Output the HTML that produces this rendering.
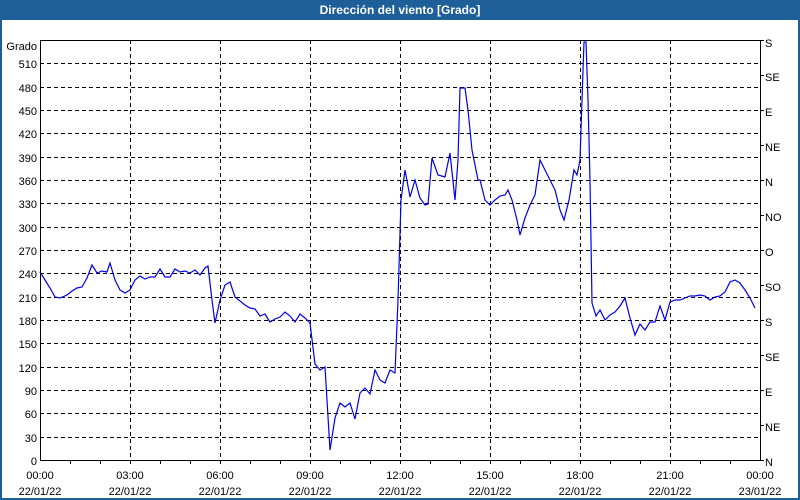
<!DOCTYPE html>
<html><head><meta charset="utf-8"><style>
html,body{margin:0;padding:0;width:800px;height:500px;overflow:hidden;background:#fff}
svg{display:block;font-family:"Liberation Sans",Tahoma,sans-serif}
</style></head><body>
<svg width="800" height="500" xmlns="http://www.w3.org/2000/svg">
<rect x="0" y="0" width="800" height="500" fill="#1e5f99"/>
<rect x="2" y="20" width="796" height="478" fill="#fff"/>
<text x="400" y="14" fill="#fff" font-size="12" font-weight="bold" text-anchor="middle">Dirección del viento [Grado]</text>
<g stroke="#000" stroke-dasharray="4,3" stroke-width="1">
<line x1="40" y1="63.5" x2="760" y2="63.5"/><line x1="40" y1="87.5" x2="760" y2="87.5"/>
<line x1="40" y1="110.5" x2="760" y2="110.5"/><line x1="40" y1="133.5" x2="760" y2="133.5"/>
<line x1="40" y1="157.5" x2="760" y2="157.5"/><line x1="40" y1="180.5" x2="760" y2="180.5"/>
<line x1="40" y1="203.5" x2="760" y2="203.5"/><line x1="40" y1="227.5" x2="760" y2="227.5"/>
<line x1="40" y1="250.5" x2="760" y2="250.5"/><line x1="40" y1="273.5" x2="760" y2="273.5"/>
<line x1="40" y1="297.5" x2="760" y2="297.5"/><line x1="40" y1="320.5" x2="760" y2="320.5"/>
<line x1="40" y1="343.5" x2="760" y2="343.5"/><line x1="40" y1="367.5" x2="760" y2="367.5"/>
<line x1="40" y1="390.5" x2="760" y2="390.5"/><line x1="40" y1="413.5" x2="760" y2="413.5"/>
<line x1="40" y1="437.5" x2="760" y2="437.5"/>
<line x1="130.5" y1="40" x2="130.5" y2="460"/><line x1="220.5" y1="40" x2="220.5" y2="460"/>
<line x1="310.5" y1="40" x2="310.5" y2="460"/><line x1="400.5" y1="40" x2="400.5" y2="460"/>
<line x1="490.5" y1="40" x2="490.5" y2="460"/><line x1="580.5" y1="40" x2="580.5" y2="460"/>
<line x1="670.5" y1="40" x2="670.5" y2="460"/>
</g>
<polyline fill="none" stroke="#0000ee" stroke-width="1.2" points="40,272 45,280 50,288 55,297 60,298 67,295 72,291 77,288 82,287 87,278 92,265 97,273 102,271 107,272 110,263 115,280 120,290 125,293 130,290 135,280 140,276 145,279 150,277 155,277 160,269 165,277 170,277 175,269 180,272 185,271 190,273 195,270 200,275 205,268 208,266 212,300 215,323 220,300 225,285 230,282 235,297 240,301 245,305 250,308 255,309 260,316 265,314 270,322 275,319 280,317 285,312 290,316 295,322 300,314 305,318 310,323 315,364 320,370 325,367 330,450 335,418 340,403 345,407 350,403 355,419 360,393 365,388 370,394 375,370 380,380 385,383 390,370 395,373 398,300 401,200 405,170 410,197 415,180 420,198 425,205 428,204 432,158 438,175 445,177 450,153 455,200 458,160 460,88 465,88 468,110 472,150 478,180 480,180 485,200 490,205 495,200 500,196 505,195 508,190 512,200 517,220 520,235 525,218 530,205 535,195 540,160 545,170 550,180 555,190 560,210 564,220 569,200 574,170 577,175 580,160 582,100 584,42 586,42 588,100 590,180 592,303 596,316 600,310 605,320 610,315 615,312 620,306 625,298 630,318 635,335 640,324 645,330 650,322 655,322 660,306 665,320 670,302 675,300 680,300 685,298 690,296 695,296 700,295 705,296 710,300 715,297 720,296 725,292 730,282 735,280 740,283 745,290 750,298 755,308"/>
<g stroke="#000" stroke-width="1">
<line x1="40.5" y1="40" x2="40.5" y2="461"/>
<line x1="40" y1="40.5" x2="760" y2="40.5"/>
<line x1="40" y1="460.5" x2="760" y2="460.5"/>
<line x1="760.5" y1="40" x2="760.5" y2="461"/>
</g>
<g stroke="#000">
<path d="M70.5 460v4M100.5 460v4M130.5 460v4M160.5 460v4M190.5 460v4M220.5 460v4M250.5 460v4M280.5 460v4M310.5 460v4M340.5 460v4M370.5 460v4M400.5 460v4M430.5 460v4M460.5 460v4M490.5 460v4M520.5 460v4M550.5 460v4M580.5 460v4M610.5 460v4M640.5 460v4M670.5 460v4M700.5 460v4M730.5 460v4"/>
<path d="M760 40.5h4M760 75.5h4M760 110.5h4M760 145.5h4M760 180.5h4M760 215.5h4M760 250.5h4M760 285.5h4M760 320.5h4M760 355.5h4M760 390.5h4M760 425.5h4M760 460.5h4"/>
</g>
<g font-size="11" fill="#000" text-anchor="end">
<text x="37" y="50">Grado</text>
<text x="37" y="68">510</text><text x="37" y="92">480</text><text x="37" y="115">450</text>
<text x="37" y="138">420</text><text x="37" y="162">390</text><text x="37" y="185">360</text>
<text x="37" y="208">330</text><text x="37" y="232">300</text><text x="37" y="255">270</text>
<text x="37" y="278">240</text><text x="37" y="302">210</text><text x="37" y="325">180</text>
<text x="37" y="348">150</text><text x="37" y="372">120</text><text x="37" y="395">90</text>
<text x="37" y="418">60</text><text x="37" y="442">30</text><text x="37" y="465">0</text>
</g>
<g font-size="11" fill="#000">
<text x="765" y="47">S</text><text x="765" y="81">SE</text><text x="765" y="116">E</text>
<text x="765" y="151">NE</text><text x="765" y="186">N</text><text x="765" y="221">NO</text>
<text x="765" y="256">O</text><text x="765" y="291">SO</text><text x="765" y="326">S</text>
<text x="765" y="361">SE</text><text x="765" y="396">E</text><text x="765" y="431">NE</text>
<text x="765" y="466">N</text>
</g>
<g font-size="11" fill="#000" text-anchor="middle">
<text x="40" y="479">00:00</text><text x="40" y="495">22/01/22</text>
<text x="130" y="479">03:00</text><text x="130" y="495">22/01/22</text>
<text x="220" y="479">06:00</text><text x="220" y="495">22/01/22</text>
<text x="310" y="479">09:00</text><text x="310" y="495">22/01/22</text>
<text x="400" y="479">12:00</text><text x="400" y="495">22/01/22</text>
<text x="490" y="479">15:00</text><text x="490" y="495">22/01/22</text>
<text x="580" y="479">18:00</text><text x="580" y="495">22/01/22</text>
<text x="670" y="479">21:00</text><text x="670" y="495">22/01/22</text>
<text x="760" y="479">00:00</text><text x="760" y="495">23/01/22</text>
</g>
</svg>
</body></html>
